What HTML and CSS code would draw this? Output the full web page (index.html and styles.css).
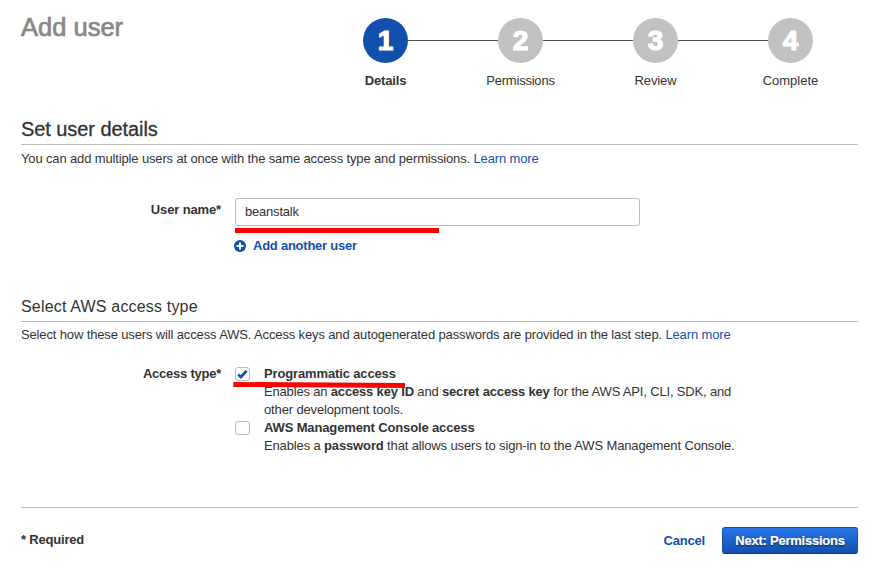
FILE: index.html
```html
<!DOCTYPE html>
<html lang="en">
<head>
<meta charset="utf-8">
<title>Add user</title>
<link rel="stylesheet" href="styles.css">
</head>
<body>
<main class="wizard">
  <header class="top">
    <h1 class="title">Add user</h1>
    <ol class="steps">
      <li class="step active"><span class="num">1</span><span class="name">Details</span></li>
      <li class="step"><span class="num">2</span><span class="name permissions">Permissions</span></li>
      <li class="step"><span class="num">3</span><span class="name">Review</span></li>
      <li class="step"><span class="num">4</span><span class="name complete">Complete</span></li>
    </ol>
  </header>

  <section class="details">
    <h2 class="heading large">Set user details</h2>
    <p class="intro first">You can add multiple users at once with the same access type and permissions. <a href="#">Learn more</a></p>
    <div class="row names">
      <label class="label" for="user">User name*</label>
      <div class="field">
        <input id="user" class="input" type="text" value="beanstalk">
        <div class="underline"></div>
        <a class="add" href="#">
          <svg class="plus" viewBox="0 0 12 12"><circle cx="6" cy="6" r="6" fill="#1350ae"/><path d="M6 2.5v7M2.5 6h7" stroke="#fff" stroke-width="2"/></svg>
          <span>Add another user</span>
        </a>
      </div>
    </div>
  </section>

  <section class="access">
    <h2 class="heading">Select AWS access type</h2>
    <p class="intro">Select how these users will access AWS. Access keys and autogenerated passwords are provided in the last step. <a href="#">Learn more</a></p>
    <div class="row types">
      <div class="label">Access type*</div>
      <div class="options">
        <div class="option">
          <span class="box"><svg viewBox="0 0 13 12"><path d="M2.2 6.4 4.9 9 10.6 2.9" fill="none" stroke="#1350ae" stroke-width="2.8"/></svg></span>
          <div class="copy">
            <b class="line">Programmatic access</b>
            <span class="line keys">Enables an <b>access key ID</b> and <b>secret access key</b> for the AWS API, CLI, SDK, and</span>
            <span class="line">other development tools.</span>
          </div>
          <svg class="marker" viewBox="0 0 173 7"><path d="M0.3 0 172 1V6L0.3 4.9z" fill="#f00"/></svg>
        </div>
        <div class="option">
          <span class="box"></span>
          <div class="copy">
            <b class="line">AWS Management Console access</b>
            <span class="line">Enables a <b>password</b> that allows users to sign-in to the AWS Management Console.</span>
          </div>
        </div>
      </div>
    </div>
  </section>

  <footer class="bottom">
    <b class="required">* Required</b>
    <div class="actions">
      <a class="cancel" href="#">Cancel</a>
      <button class="next" type="button">Next: Permissions</button>
    </div>
  </footer>
</main>
</body>
</html>
```
FILE: styles.css
```css
* { box-sizing: border-box; }
body {
  margin: 0;
  background: #fff;
  color: #333;
  font: 13px/18px "Liberation Sans", Arial, sans-serif;
  letter-spacing: -0.14px;
}
h1, h2, p, ol { margin: 0; padding: 0; font-weight: normal; }
a { color: #1350ae; text-decoration: none; }
.wizard { padding: 0 26px 0 21px; }

.top { display: flex; justify-content: space-between; height: 117px; }
.title {
  margin-top: 12px;
  color: #888;
  font-size: 25.5px;
  line-height: 30px;
  letter-spacing: 0;
  -webkit-text-stroke: 0.7px #888;
}
.steps { display: flex; list-style: none; margin: 18px 0 0; }
.step {
  position: relative;
  display: flex;
  flex-direction: column;
  align-items: center;
  width: 135px;
}
.step + .step::before {
  content: "";
  position: absolute;
  top: 22px;
  left: -45px;
  width: 90px;
  height: 1px;
  background: #545454;
}
.num {
  width: 45px;
  height: 45px;
  border-radius: 50%;
  background: #c1c1c1;
  color: #fff;
  font-size: 28px;
  font-weight: bold;
  line-height: 46px;
  letter-spacing: 0;
  text-align: center;
  -webkit-text-stroke: 1.1px #fff;
}
.name { margin-top: 9px; }
.name.permissions { letter-spacing: -0.22px; }
.name.complete { letter-spacing: 0; }
.active .num { background: #1350ae; }
.active .name { font-weight: bold; }

.details { height: 179px; }
.heading {
  height: 26px;
  border-bottom: 1px solid #bbb;
  font-size: 16px;
  line-height: 21px;
  letter-spacing: 0.18px;
}
.heading.large {
  height: 28px;
  font-size: 20px;
  line-height: 24px;
  letter-spacing: -0.07px;
  -webkit-text-stroke: 0.3px #333;
}
.intro { margin-top: 4px; white-space: nowrap; }
.intro.first { margin-top: 5px; }
.row { display: flex; }
.names { margin-top: 30px; }
.label { width: 200px; padding-top: 3px; text-align: right; font-weight: bold; }
.field { margin-left: 14px; width: 405px; }
.input {
  display: block;
  width: 405px;
  height: 28px;
  padding: 0 9px 2px;
  border: 1px solid #bbb;
  border-radius: 3px;
  background: #fff;
  color: #333;
  font: inherit;
  letter-spacing: -0.2px;
}
.underline { width: 204px; height: 5px; margin-top: 2px; background: #f00; }
.add {
  display: flex;
  align-items: center;
  margin: 4px 0 0 -1px;
  font-weight: bold;
  letter-spacing: -0.24px;
}
.plus { width: 12px; height: 12px; margin: -1px 7px 0 0; }

.access { height: 211px; }
.types { margin-top: 21px; }
.types .label { padding-top: 0; letter-spacing: -0.24px; }
.options { margin-left: 14px; }
.option { position: relative; display: flex; }
.box {
  width: 15px;
  height: 14px;
  margin-top: 2px;
  border: 1px solid #bbb;
  border-radius: 3px;
}
.box svg { display: block; width: 13px; height: 12px; }
.copy { margin-left: 14px; }
.line { display: block; white-space: nowrap; }
.keys { letter-spacing: -0.17px; }
.marker { position: absolute; left: -2px; top: 17px; width: 173px; height: 7px; }

.bottom {
  display: flex;
  justify-content: space-between;
  align-items: center;
  padding-top: 19px;
  border-top: 1px solid #bbb;
}
.required { margin-top: -2px; letter-spacing: -0.2px; }
.actions { display: flex; align-items: center; }
.cancel { margin-right: 17px; font-weight: bold; letter-spacing: -0.2px; }
.next {
  width: 136px;
  height: 27px;
  padding: 0;
  border: 1px solid #1350ae;
  border-bottom-color: #09347a;
  border-radius: 3px;
  background: linear-gradient(#2775e8, #1350ae);
  color: #fff;
  font: bold 13px/25px "Liberation Sans", Arial, sans-serif;
  letter-spacing: -0.24px;
  text-shadow: 0 1px 2px rgba(0, 0, 0, 0.7);
  white-space: nowrap;
  -webkit-text-stroke: 0.2px #fff;
}
```
